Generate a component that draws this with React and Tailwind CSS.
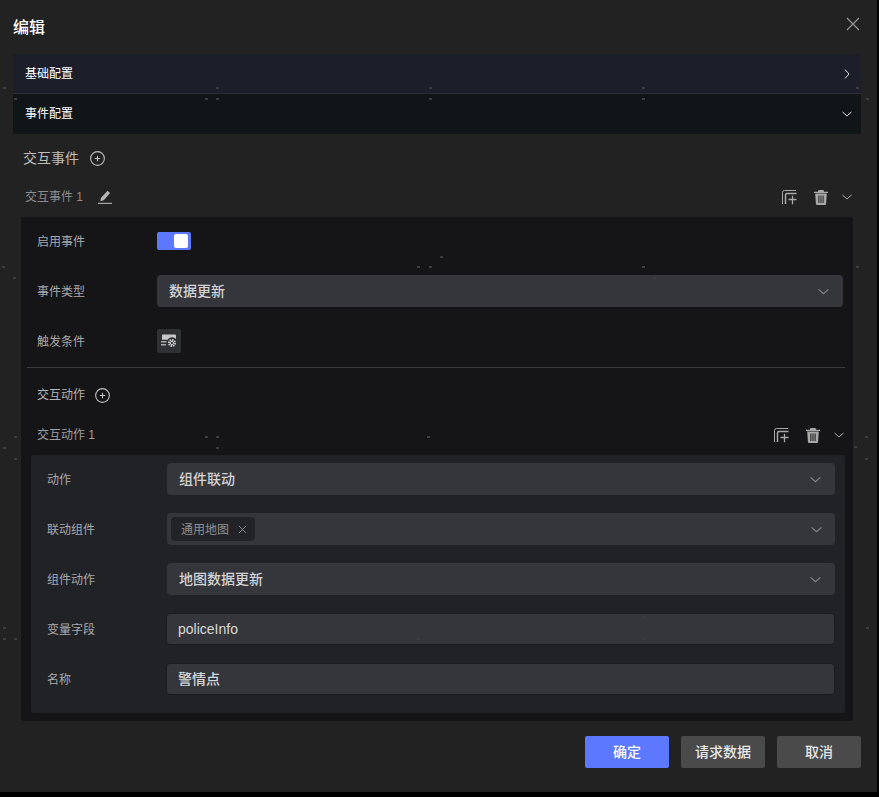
import React from 'react';

const Chevron = ({ className = 'w-3 h-3 text-[#9a9a9c]' }) => (
  <svg viewBox="0 0 12 12" className={className} fill="none" stroke="currentColor" strokeWidth="1">
    <path d="M1.5 4l4.5 4 4.5-4" />
  </svg>
);

const PlusCircle = () => (
  <svg viewBox="0 0 14 14" className="w-[15px] h-[15px] text-[#c4c4c4]" fill="none" stroke="currentColor" strokeWidth="1">
    <circle cx="7" cy="7" r="6.4" />
    <path d="M4.5 7h5M7 4.5v5" />
  </svg>
);

const CopyPlus = () => (
  <svg viewBox="0 0 15 15" className="w-[15px] h-[15px] text-[#a8a8a8]" fill="none" stroke="currentColor">
    <path d="M.5 14V2.5a2 2 0 0 1 2-2H14" strokeWidth="1" />
    <path d="M3.5 14V5a1.5 1.5 0 0 1 1.500-1.500H14.500" strokeWidth="1.500" />
    <path d="M6.500 9.500h8M10.500 5.800v8.500" strokeWidth="1.300" />
  </svg>
);

const Trash = () => (
  <svg viewBox="0 0 14 15" className="w-[14px] h-[15px] text-[#a8a8a8]" fill="currentColor">
    <path d="M4.500 0h5l.6 1.800H14V3H0V1.800h3.900z" />
    <path fillRule="evenodd" d="M1.200 3.600h11.600l-.7 10.200a1.200 1.200 0 0 1-1.200 1.200H3.100a1.200 1.200 0 0 1-1.200-1.200zM4.400 5.500v7.500h1V5.500zM6.500 5.500v7.500h1V5.500zM8.600 5.500v7.500h1V5.500z" />
  </svg>
);

const Pencil = () => (
  <svg viewBox="0 0 14 14" className="w-[14px] h-[14px] text-[#b4b4b4]" fill="currentColor">
    <path d="M9.500.8l2.600 2.200-6.300 7.300-3.400 1 .4-3.200z" />
    <rect x="0" y="12.800" width="14" height="1.100" />
  </svg>
);

const TriggerIcon = () => (
  <svg viewBox="0 0 16 14" className="w-4 h-[14px] text-[#c8c8c8]" fill="currentColor">
    <path d="M1 1.500a1 1 0 0 1 1-1h12a1 1 0 0 1 1 1V5a5 5 0 0 0-8.300.8H1z" />
    <rect x="0" y="7.200" width="5.500" height="1.200" />
    <rect x="0" y="10.200" width="5" height="1.200" />
    <circle cx="11" cy="9" r="3" fill="none" stroke="currentColor" strokeWidth="2" strokeDasharray="1.500 .8" />
    <circle cx="11" cy="9" r="1.600" fill="none" stroke="currentColor" strokeWidth="1" />
  </svg>
);

const Select = ({ value }) => (
  <div className="h-8 flex-1 flex items-center justify-between pl-3 pr-[13px] rounded bg-[#35363c]">
    <span className="text-[14px] font-medium text-[#d4d4d6]">{value}</span>
    <Chevron className="w-[13px] h-[13px] text-[#85868a]" />
  </div>
);

const Input = ({ value }) => (
  <div className="h-8 flex-1 flex items-center px-[11px] -ml-px rounded border border-[#1c1c1e] bg-[#35363c]">
    <span className="pt-px text-[14px] font-medium text-[#d8d8da]">{value}</span>
  </div>
);

const Row = ({ label, children, className = '' }) => (
  <div className={`flex items-center ${className}`}>
    <div className="w-[120px] shrink-0 pt-[2px] text-[12px] text-[#a9a9ab]">{label}</div>
    {children}
  </div>
);

const Actions = () => (
  <div className="flex items-center">
    <CopyPlus />
    <span className="ml-[17px]"><Trash /></span>
    <span className="ml-[13px] -mr-px"><Chevron className="w-3 h-3 text-[#a8a8a8]" /></span>
  </div>
);

const specks = [
  [4, 88], [217, 88], [430, 88], [643, 88], [857, 88],
  [15, 99], [206, 99], [217, 99], [430, 99], [643, 99], [867, 99],
  [441, 257], [418, 267], [430, 267], [643, 267], [857, 267], [3, 267], [654, 278], [14, 278],
  [15, 437], [206, 437], [217, 437], [428, 437], [4, 448], [217, 448], [15, 459], [855, 447], [866, 437], [866, 459],
  [4, 628], [4, 639], [15, 639], [228, 617], [418, 639], [643, 617], [643, 639], [867, 628],
];

export default function App() {
  return (
    <div className="w-[879px] h-[797px] bg-black font-['Liberation_Sans','Noto_Sans_CJK_SC',sans-serif] relative overflow-hidden">
      <div className="w-[877px] h-[792px] bg-[#222223] flex flex-col">
        {/* header */}
        <div className="h-[54px] shrink-0 flex items-center justify-between pl-[13px] pr-[18px]">
          <span className="pt-[2px] text-[16px] font-medium text-white">编辑</span>
          <svg viewBox="0 0 14 14" className="w-[14px] h-[14px] text-[#9a9a9c] -mt-[6px] mr-[-1px]" fill="none" stroke="currentColor" strokeWidth="1.100">
            <path d="M1 1l12 12M13 1L1 13" />
          </svg>
        </div>

        {/* collapse bars */}
        <div className="mx-[13px] w-[848px]">
          <div className="h-10 flex items-center justify-between pl-3 pr-2 bg-[#1c1f2a] border-b border-[#2b2d38]">
            <span className="text-[12px] text-white">基础配置</span>
            <Chevron className="w-3 h-3 text-[#d8d8d8] -rotate-90" />
          </div>
          <div className="h-10 flex items-center justify-between pl-3 pr-2 bg-[#101518]">
            <span className="text-[12px] text-white">事件配置</span>
            <Chevron className="w-3 h-3 text-[#d8d8d8]" />
          </div>
        </div>

        {/* events */}
        <div className="h-12 shrink-0 flex items-center pl-[23px] gap-[11px] text-[14px] text-[#bdbdbd]">
          交互事件
          <PlusCircle />
        </div>
        <div className="h-[35px] shrink-0 flex items-center justify-between pl-[25px] pr-[25px] pb-[5px]">
          <div className="flex items-center gap-[15px] text-[12px] text-[#8c8c8e]">
            交互事件 1
            <Pencil />
          </div>
          <Actions />
        </div>

        <div className="mx-[21px] w-[832px] h-[504px] rounded-[2px] bg-[#151517] pt-[8px] shrink-0">
          <Row label="启用事件" className="h-8 pl-4">
            <div className="w-[34px] h-[18px] rounded-[2px] bg-[#5b78ff] flex items-center justify-end pr-[3px]">
              <div className="w-[14px] h-[14px] rounded-[2px] bg-white" />
            </div>
          </Row>
          <Row label="事件类型" className="h-8 pl-4 pr-[10px] mt-[18px]">
            <Select value="数据更新" />
          </Row>
          <Row label="触发条件" className="h-8 pl-4 mt-[18px]">
            <div className="w-6 h-6 rounded-[2px] bg-[#2f3034] flex items-center justify-center">
              <TriggerIcon />
            </div>
          </Row>
          <div className="h-px ml-[6px] mr-[8px] mt-[10px] bg-[#3a3a3c]" />

          <div className="h-[54px] flex items-center pl-4 gap-[10px] text-[12px] text-[#b4b4b6]">
            交互动作
            <PlusCircle />
          </div>
          <div className="h-[26px] flex items-center justify-between pl-4 pr-[9px]">
            <span className="text-[12px] text-[#9c9ea2]">交互动作 1</span>
            <Actions />
          </div>

          <div className="mx-[10px] mt-[7px] w-[814px] h-[258px] rounded-[3px] bg-[#212226] pt-2 px-4 pr-[10px]">
            <Row label="动作">
              <Select value="组件联动" />
            </Row>
            <Row label="联动组件" className="mt-[18px]">
              <div className="h-8 flex-1 flex items-center justify-between pl-1 pr-[12px] rounded bg-[#35363c]">
                <div className="h-6 w-[84px] flex items-center justify-between pl-[10px] pr-2 pt-px rounded bg-[#222326] text-[12px] text-[#8f9094]">
                  通用地图
                  <svg viewBox="0 0 10 10" className="w-[9px] h-[9px] text-[#9a9a9c]" fill="none" stroke="currentColor" strokeWidth="1">
                    <path d="M1 1l8 8M9 1L1 9" />
                  </svg>
                </div>
                <Chevron className="w-[13px] h-[13px] text-[#85868a]" />
              </div>
            </Row>
            <Row label="组件动作" className="mt-[18px]">
              <Select value="地图数据更新" />
            </Row>
            <Row label="变量字段" className="mt-[18px]">
              <Input value="policeInfo" />
            </Row>
            <Row label="名称" className="mt-[18px]">
              <Input value="警情点" />
            </Row>
          </div>
        </div>

        {/* footer */}
        <div className="flex justify-end gap-3 pr-4 mt-[15px]">
          <button className="w-[84px] h-8 rounded-[2px] bg-[#5b78ff] text-[14px] font-medium text-white">确定</button>
          <button className="w-[84px] h-8 rounded-[2px] bg-[#4a4a4a] text-[14px] font-medium text-[#e8e8e8]">请求数据</button>
          <button className="w-[84px] h-8 rounded-[2px] bg-[#4a4a4a] text-[14px] font-medium text-[#e8e8e8]">取消</button>
        </div>
      </div>

      {specks.map(([x, y]) => (
        <div key={`${x}-${y}`} className="absolute w-[3px] h-[2px] bg-[#3c3c40]" style={{ left: x - 1, top: y - 1 }} />
      ))}
    </div>
  );
}
